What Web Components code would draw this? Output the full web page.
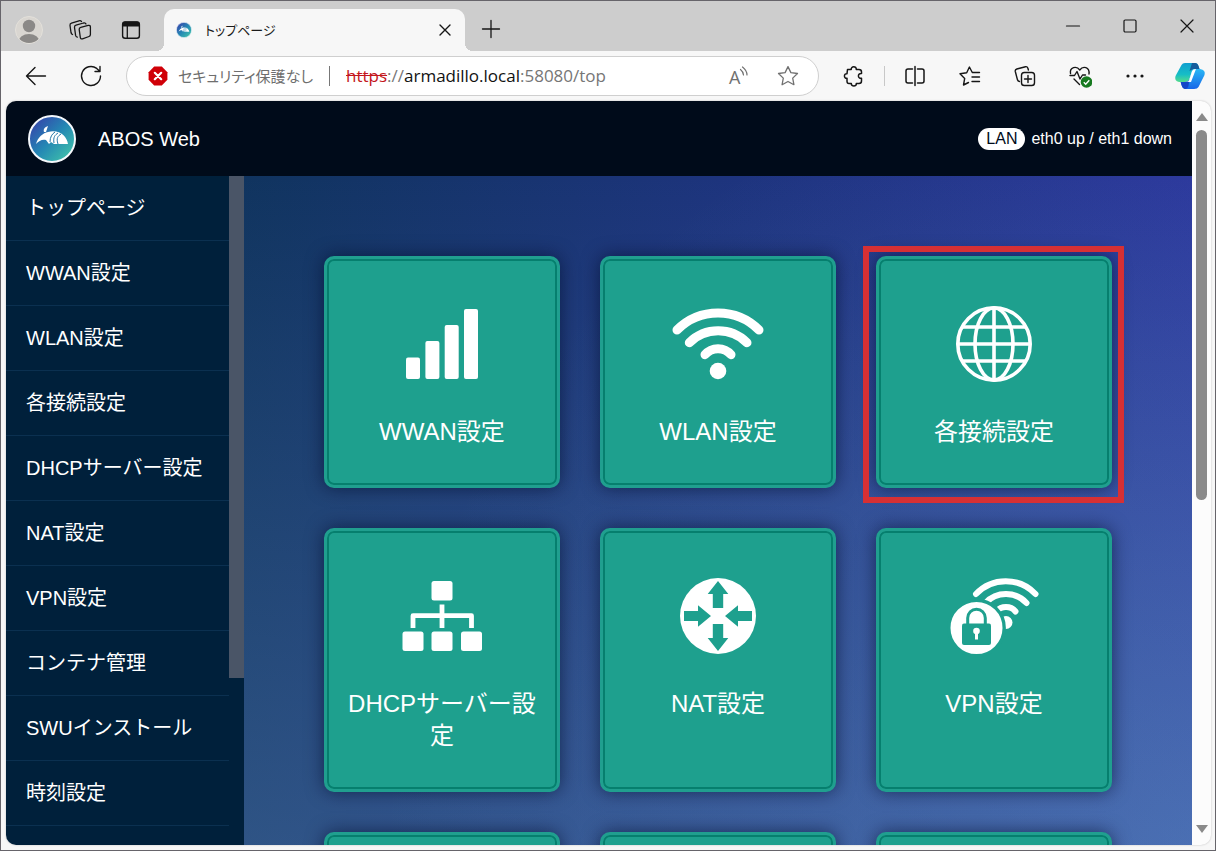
<!DOCTYPE html>
<html lang="ja">
<head>
<meta charset="utf-8">
<title>トップページ</title>
<style>
  html, body { margin: 0; height: 100%; }
  body { font-family: "Liberation Sans", "Noto Sans CJK JP", sans-serif; overflow: hidden; }
</style>
</head>
<body>
<browser-window>
  <tab-strip slot="tabs">トップページ</tab-strip>
  <tool-bar slot="toolbar"></tool-bar>
  <abos-page>
    <side-menu slot="menu">
      <menu-item>トップページ</menu-item>
      <menu-item>WWAN設定</menu-item>
      <menu-item>WLAN設定</menu-item>
      <menu-item>各接続設定</menu-item>
      <menu-item>DHCPサーバー設定</menu-item>
      <menu-item>NAT設定</menu-item>
      <menu-item>VPN設定</menu-item>
      <menu-item>コンテナ管理</menu-item>
      <menu-item>SWUインストール</menu-item>
      <menu-item>時刻設定</menu-item>
    </side-menu>
    <setting-card icon="bars">WWAN設定</setting-card>
    <setting-card icon="wifi">WLAN設定</setting-card>
    <setting-card icon="globe" marked>各接続設定</setting-card>
    <setting-card icon="tree">DHCPサーバー設定</setting-card>
    <setting-card icon="nat">NAT設定</setting-card>
    <setting-card icon="vpn">VPN設定</setting-card>
    <setting-card></setting-card>
    <setting-card></setting-card>
    <setting-card></setting-card>
  </abos-page>
</browser-window>

<script>
const S = 'fill="none" stroke="currentColor" stroke-linecap="round" stroke-linejoin="round"';
const LOGO = `<defs><linearGradient id="lg" x1="0" y1="0" x2="1" y2="1"><stop offset="0" stop-color="#3a35a8"/><stop offset=".5" stop-color="#2487b4"/><stop offset="1" stop-color="#45cfa8"/></linearGradient></defs>
  <circle cx="24" cy="24" r="23" fill="url(#lg)" stroke="#f4f8fc" stroke-width="2"/>
  <path fill="#fff" d="M8 29C10 22 15 18 20 17C31 14 39 21 40 29H26L23 27L21 29L18 25C14 24 11 26 8 29ZM16 17C15 14 17 12 20 11L18 17Z"/>
  <path d="M22 27C22 22 24 19 27 17M26 28C25 22 27 20 30 18M30 29C28 23 30 21 33 19" fill="none" stroke="#2477a8" stroke-width="1"/>`;
/* name -> [viewBox, markup] */
const ICONS = {
  logo: ['0 0 48 48', LOGO],
  profile: ['0 0 28 28', `<defs><clipPath id="pc"><circle cx="14" cy="14" r="13"/></clipPath></defs><circle cx="14" cy="14" r="13.5" fill="#d9d6d1" stroke="#e3e0da"/><g fill="#8b8987" clip-path="url(#pc)"><circle cx="14" cy="10" r="6.2"/><ellipse cx="14" cy="26" rx="10.5" ry="8"/></g>`],
  spaces: ['0 0 24 24', `<g ${S} stroke-width="1.3"><path d="M12.8 9.300L20.200 7.400Q22.400 7 22.400 9V16.500Q22.400 18 21 18.500L14.500 20.800Q12.500 21.400 12.300 19.400L11.200 11.500Q11 9.800 12.800 9.300Z"/><path d="M9.300 19.200Q8 19 7.600 17.400L6.500 9.500Q6.300 7.700 8 7.200L15.500 5Q17.500 4.600 18 6"/><path d="M4.500 16.500Q3.300 16 3 14.500L2 7.500Q1.800 5.600 3.500 5.100L11 2.800Q12.800 2.400 13.500 3.500"/></g>`],
  tabs: ['0 0 24 24', `<rect x="3.600" y="4" width="16.800" height="16.200" rx="2.500" ${S} stroke-width="1.400"/><path d="M3.500 8.500V6Q3.500 3.500 6 3.500H18Q20.500 3.500 20.500 6V8.500Z" fill="currentColor"/><path d="M8.300 8V20" ${S} stroke-width="1.300"/>`],
  cross: ['0 0 24 24', `<path d="M7 7L17 17M17 7L7 17" ${S} stroke-width="1.400"/>`],
  plus: ['0 0 24 24', `<path d="M12 3.500V20.500M3.500 12H20.500" ${S} stroke-width="1.300"/>`],
  minimize: ['0 0 24 24', `<path d="M5.500 12H18.500" ${S} stroke-width="1.200"/>`],
  maximize: ['0 0 24 24', `<rect x="6" y="6" width="12" height="12" rx="1.200" ${S} stroke-width="1.200"/>`],
  exit: ['0 0 24 24', `<path d="M6 6L18 18M18 6L6 18" ${S} stroke-width="1.200"/>`],
  back: ['0 0 24 24', `<path d="M21.500 12H2.500M11 3.500L2.500 12L11 20.500" ${S} stroke-width="1.400"/>`],
  reload: ['0 0 24 24', `<path d="M21.500 12A9.500 9.500 0 1 1 17.700 4.400L20.500 7M21 2.500V7.500H16" ${S} stroke-width="1.400"/>`],
  danger: ['0 0 20 20', `<path d="M6.200 .6H13.800L19.400 6.200V13.800L13.800 19.400H6.200L.6 13.800V6.200Z" fill="#d00008"/><path d="M6.800 6.800L13.200 13.200M13.200 6.800L6.800 13.200" stroke="#fff" stroke-width="2.200" stroke-linecap="round"/>`],
  read: ['0 0 24 24', `<text x="3" y="20" font-family="Open Sans, sans-serif" font-size="18" fill="currentColor">A</text><path d="M14.500 5.500Q17.500 8 17.500 11M16.500 3Q21 6.500 21 11" ${S} stroke-width="1.200"/>`],
  star: ['0 0 24 24', `<path d="M12 2.600L14.900 8.600L21.500 9.500L16.700 14.100L17.900 20.700L12 17.500L6.100 20.700L7.300 14.100L2.500 9.500L9.100 8.600Z" ${S} stroke-width="1.300"/>`],
  puzzle: ['0 0 24 24', `<path d="M5.500 5.500H9.200C8.800 1.800 14.600 1.800 14.300 5.500H17Q19.500 5.500 19.500 8V9.600C15.400 9 15.400 14.800 19.500 14.300V17Q19.500 19.500 17 19.500H14.300C14.800 22.800 9 22.800 9.300 19.500H7Q5 19.500 5 17.200V14.300C1.600 14.800 1.600 9.200 5 9.700Z" ${S} stroke-width="1.500"/>`],
  split: ['0 0 24 24', `<path d="M9.500 5H5Q3 5 3 7V17Q3 19 5 19H9.500M14.500 5H19Q21 5 21 7V17Q21 19 19 19H14.500M12 2.500V21.500" ${S} stroke-width="1.500"/>`],
  favorites: ['0 0 24 24', `<path d="M21.500 8.500H14.300L11.400 3L8.700 8.800L2 9.800L6.700 14.400L5.500 21L10.500 18.500M14 13H21.500M14 17.500H21.500" ${S} stroke-width="1.400"/>`],
  collections: ['0 0 24 24', `<path d="M6.500 17.500Q4.800 17.300 4.400 15.500L2.300 7.500Q1.900 5.600 3.800 5L12.500 2.700Q14.300 2.400 14.900 4.200L15.400 6" ${S} stroke-width="1.400"/><rect x="8.500" y="8.500" width="13" height="13" rx="2.800" ${S} stroke-width="1.400"/><path d="M15 11.500V18.500M11.500 15H18.500" ${S} stroke-width="1.400"/>`],
  health: ['0 0 24 24', `<path d="M2.500 9.500C1.500 3 8.500 1.500 11.800 6C15 1.500 21.800 3 21 10M6 15L11.500 20.500M2 11.500H6.500L9 7.500L12 15L14.500 11H17.500" ${S} stroke-width="1.400"/><circle cx="18.500" cy="18" r="5.800" fill="#177a20"/><path d="M15.800 18.300L17.700 20.200L21.300 16.200" fill="none" stroke="#fff" stroke-width="1.400"/>`],
  dots: ['0 0 24 24', `<g fill="currentColor"><circle cx="5" cy="12" r="1.600"/><circle cx="12" cy="12" r="1.600"/><circle cx="19" cy="12" r="1.600"/></g>`],
  copilot: ['0 0 32 32', `<defs><linearGradient id="c1" x1="0" y1="0" x2="0" y2="1"><stop offset="0" stop-color="#109fd0"/><stop offset=".6" stop-color="#16bdc6"/><stop offset="1" stop-color="#55dc8c"/></linearGradient><linearGradient id="c2" x1="0" y1="0" x2="0" y2="1"><stop offset="0" stop-color="#29b8f5"/><stop offset="1" stop-color="#1766e8"/></linearGradient></defs>
    <path d="M7.500 5Q8.500 3 11 3H21Q23.500 3 24.500 6L25.500 9Q19 8 17.500 13L15.500 19Q14.500 22 11 22H5Q0 21 1.500 16Z" fill="url(#c1)"/>
    <path d="M18 3H21Q23.500 3 24.500 6L25.500 9H19L15.500 11Z" fill="#155c9c"/>
    <path d="M24.500 27Q23.500 29 20 29H12Q8.500 29 7.500 25L6.700 22H11Q14.500 22 15.500 19L18 11Q18.800 9 22 9H26Q32 10 30.500 15Z" fill="url(#c2)"/>
    <path d="M6.700 22H11Q14.500 22 15.500 19L14.500 26Q13.500 29 11 29Q8 28 7.500 25Z" fill="#1546c8"/><path d="M18 11Q19 9 22 9L17 22H12Q15 22 15.500 19Z" fill="#fff"/>`],
  bars: ['0 0 96 96', `<g fill="#fff"><rect x="12" y="61.500" width="14" height="21.500" rx="2"/><rect x="31.400" y="45" width="14" height="38" rx="2"/><rect x="50.700" y="29" width="14" height="54" rx="2"/><rect x="70" y="13" width="14" height="70" rx="2"/></g>`],
  wifi: ['0 0 96 96', `<path d="M7 34A58 58 0 0 1 89 34M19.300 46.700A41 41 0 0 1 77 46.700M35 58.700A17 17 0 0 1 61 58.700" fill="none" stroke="#fff" stroke-width="9" stroke-linecap="round"/><circle cx="48" cy="75" r="8.300" fill="#fff"/>`],
  globe: ['0 0 96 96', `<g fill="none" stroke="#fff" stroke-width="3.600"><circle cx="48" cy="48" r="36.200"/><ellipse cx="48" cy="48" rx="19" ry="36"/><path d="M48 12V84M12 48H84M17 31H79M17 65H79"/></g>`],
  tree: ['0 0 96 96', `<g fill="#fff"><rect x="37.500" y="13" width="21" height="19.500" rx="2.500"/><rect x="8.500" y="63.500" width="21" height="19.500" rx="2.500"/><rect x="37.500" y="63.500" width="21" height="19.500" rx="2.500"/><rect x="67" y="63.500" width="21" height="19.500" rx="2.500"/></g><path d="M19 60V47.700H77.500V60M48 36.500V60" fill="none" stroke="#fff" stroke-width="4.800" stroke-linejoin="round"/>`],
  nat: ['0 0 96 96', `<circle cx="48" cy="48" r="38" fill="#fff"/><g fill="#1ea08e"><path d="M48 13L58.300 26H53.200V40H42.800V26H37.700Z"/><path d="M48 83L58.300 70H53.200V56H42.800V70H37.700Z"/><path d="M41 48L28 37.300V43H14V53H28V58.700Z"/><path d="M55 48L68 37.300V43H82V53H68V58.700Z"/></g>`],
  vpn: ['0 0 96 96', `<path d="M30 26A41 41 0 0 1 89.500 26M39.500 35A28 28 0 0 1 80.500 35M50.500 43.500A12.500 12.500 0 0 1 69.500 43.500" fill="none" stroke="#fff" stroke-width="6" stroke-linecap="round"/><circle cx="60" cy="54.500" r="6.500" fill="#fff"/>
    <circle cx="30.500" cy="60" r="27.700" fill="#fff" stroke="#1ea08e" stroke-width="3.400"/><rect x="16" y="55.500" width="29" height="21.500" rx="2" fill="#1ea08e"/><path d="M21.700 57V50A8.800 8.800 0 0 1 39.300 50V57" fill="none" stroke="#1ea08e" stroke-width="3"/><circle cx="30.500" cy="63" r="3.300" fill="#fff"/><path d="M29 64H32V71.500H29Z" fill="#fff"/>`]
};

const define = (name, html, setup) => {
  const template = document.createElement('template');
  template.innerHTML = html;
  customElements.define(name, class extends HTMLElement {
    constructor() {
      super();
      this.attachShadow({ mode: 'open' }).append(template.content.cloneNode(true));
    }
    connectedCallback() { if (setup) setup(this, this.shadowRoot); }
  });
};

define('ui-icon', `<style>
  :host { display: block; flex: none; width: 24px; height: 24px; }
  div, svg { display: block; width: 100%; height: 100%; }
</style><div></div>`, (el, root) => {
  const icon = ICONS[el.getAttribute('name')];
  root.querySelector('div').innerHTML = icon ? `<svg viewBox="${icon[0]}" aria-hidden="true">${icon[1]}</svg>` : '';
});

define('icon-button', `<style>
  :host { display: block; flex: none; width: 40px; color: #161616; }
  button { all: unset; display: flex; align-items: center; justify-content: center; width: 100%; height: 40px; }
</style><button type="button"></button>`, (el, root) => {
  const button = root.querySelector('button');
  button.setAttribute('aria-label', el.getAttribute('label'));
  const icon = document.createElement('ui-icon');
  icon.setAttribute('name', el.getAttribute('icon'));
  const size = el.getAttribute('size');
  if (size) icon.style.width = icon.style.height = size + 'px';
  button.replaceChildren(icon);
});

define('browser-window', `<style>
  :host { display: flex; flex-direction: column; box-sizing: border-box; height: 100vh; border: 1px solid #66646a; background: #f7f7f7; }
  .view { display: flex; flex: 1; min-height: 0; margin: 0 4px 5px 5px; border-radius: 10px; overflow: hidden; background: #fcfcfc; box-shadow: 0 0 2px #bbb; }
  ::slotted(abos-page) { flex: 1; }
</style>
<slot name="tabs"></slot><slot name="toolbar"></slot>
<div class="view"><slot></slot><page-scrollbar></page-scrollbar></div>`);

define('page-scrollbar', `<style>
  :host { display: flex; flex-direction: column; align-items: center; gap: 9px; box-sizing: border-box; width: 19px; padding: 12px 0; }
  i { width: 0; height: 0; border: 6px solid transparent; }
  .up { border-top: 0; border-bottom: 8px solid #8a8a8a; }
  .down { border-bottom: 0; border-top: 8px solid #8a8a8a; }
  .track { flex: 1; width: 11px; }
  .thumb { height: 54%; border-radius: 6px; background: #8a8a8a; }
</style><i class="up"></i><div class="track"><div class="thumb"></div></div><i class="down"></i>`);

define('tab-strip', `<style>
  :host { display: flex; flex: none; height: 50px; background: #cdcdcd; }
  .left { display: flex; align-items: center; gap: 11px; padding: 8px 13px 0 8px; }
  .tab { position: relative; display: flex; align-items: center; flex: 0 1 301px; gap: 13px; box-sizing: border-box; margin-top: 8px; padding-left: 12px; border-radius: 10px 10px 0 0; background: #f7f7f7; }
  .tab::before, .tab::after { content: ""; position: absolute; bottom: 0; width: 8px; height: 8px; }
  .tab::before { right: 100%; background: radial-gradient(circle at 0 0, #cdcdcd 8px, #f7f7f7 8px); }
  .tab::after { left: 100%; background: radial-gradient(circle at 100% 0, #cdcdcd 8px, #f7f7f7 8px); }
  .title { flex: 1; font-size: 13px; line-height: 20px; color: #1b1b1b; font-family: "Noto Sans CJK JP", sans-serif; font-feature-settings: "palt"; }
  .add { margin: 8px 0 0 6px; }
  .controls { display: flex; margin-left: auto; padding-top: 5px; }
  .controls icon-button { width: 57px; }
  .favicon { width: 16px; height: 16px; }
</style>
<div class="left"><icon-button icon="profile" size="28" label="プロファイル"></icon-button><icon-button icon="spaces" label="ワークスペース"></icon-button><icon-button icon="tabs" label="タブ操作"></icon-button></div>
<div class="tab"><ui-icon class="favicon" name="logo"></ui-icon><span class="title"><slot></slot></span><icon-button icon="cross" label="タブを閉じる"></icon-button></div>
<icon-button class="add" icon="plus" label="新しいタブ"></icon-button>
<div class="controls"><icon-button icon="minimize" label="最小化"></icon-button><icon-button icon="maximize" label="最大化"></icon-button><icon-button icon="exit" label="閉じる"></icon-button></div>`);

define('tool-bar', `<style>
  :host { display: flex; flex: none; align-items: center; gap: 15px; height: 50px; padding: 0 5px 0 15px; }
  .address { display: flex; flex: 1; align-items: center; box-sizing: border-box; height: 40px; padding: 0 5px 0 21px; border: 1px solid #cfcfcf; border-radius: 20px; background: #fff; color: #6e6e6e; min-width: 0; white-space: nowrap; }
  .danger { width: 20px; height: 20px; }
  .state { margin-left: 10px; font: 15px/24px "Noto Sans CJK JP", sans-serif; font-feature-settings: "palt"; }
  .bar { width: 1px; height: 20px; margin: 0 16px; background: #777; }
  .url { flex: 1; outline: 0; font: 17px/24px "Open Sans", sans-serif; color: #767676; }
  .url s { color: #c4161c; }
  .url b { font-weight: 400; color: #111; }
  .address icon-button { color: #707070; width: 50px; }
  .sep { width: 1px; height: 20px; margin: 0 -5px; background: #c8c8c8; }
</style>
<icon-button icon="back" label="戻る"></icon-button><icon-button icon="reload" label="更新"></icon-button>
<div class="address"><ui-icon class="danger" name="danger"></ui-icon><span class="state">セキュリティ保護なし</span><span class="bar"></span>
<div class="url" role="textbox" contenteditable="true" spellcheck="false" aria-label="アドレス"><s>https</s>://<b>armadillo.local</b>:58080/top</div>
<icon-button icon="read" label="音声で読み上げる"></icon-button><icon-button icon="star" label="お気に入りに追加"></icon-button></div>
<icon-button icon="puzzle" label="拡張機能"></icon-button><span class="sep"></span><icon-button icon="split" label="画面を分割する"></icon-button><icon-button icon="favorites" label="お気に入り"></icon-button><icon-button icon="collections" label="コレクション"></icon-button><icon-button icon="health" label="ブラウザーのエッセンシャル"></icon-button><icon-button icon="dots" label="設定など"></icon-button><icon-button icon="copilot" size="32" label="Copilot"></icon-button>`);

define('abos-page', `<style>
  :host { display: flex; flex-direction: column; min-width: 0; }
  header { display: flex; flex: none; align-items: center; height: 75px; padding: 0 20px 0 22px; background: #000b1a; color: #fff; }
  header ui-icon { width: 48px; height: 48px; }
  h1 { margin: 0 auto 0 22px; font-size: 20px; line-height: 24px; font-weight: 400; }
  .lan { margin-right: 6px; padding: 0 8px; border-radius: 11px; background: #fff; color: #000b1a; }
  .lan, .state { font-size: 16px; line-height: 22px; }
  .body { display: flex; flex: 1; min-height: 0; }
  main { display: grid; flex: 1; grid-template-columns: repeat(3, 1fr); grid-auto-rows: max-content; gap: 40px; min-width: 0; padding: 80px; overflow: hidden;
    background: radial-gradient(circle at 100% 100%, rgba(120,220,210,.2), rgba(120,220,210,0) 70%), linear-gradient(rgba(100,140,200,0), rgba(100,140,200,.36)), linear-gradient(to right, #10345f, #2a349b); }
</style>
<header><ui-icon name="logo"></ui-icon><h1>ABOS Web</h1><span class="lan">LAN</span><span class="state">eth0 up / eth1 down</span></header>
<div class="body"><slot name="menu"></slot><main><slot></slot></main></div>`);

define('side-menu', `<style>
  :host { display: flex; flex: none; width: 238px; background: #00203b; overflow: hidden; }
  nav { flex: 1; }
  .track { width: 15px; }
  .thumb { height: 75%; background: #4a5567; }
</style><nav><slot></slot></nav><div class="track"><div class="thumb"></div></div>`);

define('menu-item', `<style>
  :host { display: block; }
  a { display: block; padding: 16px 20px; border-bottom: 1px solid #0b3050; color: #fff; font-size: 20px; line-height: 32px; text-decoration: none; white-space: nowrap; }
</style><a href="#"><slot></slot></a>`);

define('setting-card', `<style>
  :host { display: grid; position: relative; min-height: 232px; }
  a { display: flex; flex-direction: column; align-items: center; gap: 24px; box-sizing: border-box; padding: 37px 17px; border: 3px solid #209f8f; border-radius: 10px; background: #1ea08e; box-shadow: inset 0 0 0 2px #067f6e, 0 0 18px rgba(0,10,40,.6); color: #fff; font-size: 24px; line-height: 32px; text-align: center; text-decoration: none; word-break: break-all; }
  ui-icon { width: 96px; height: 96px; }
  :host([marked])::after { content: ""; position: absolute; inset: -10px -12px -15px -13px; border: 6px solid #d63034; pointer-events: none; }
</style><a href="#"><ui-icon></ui-icon><span><slot></slot></span></a>`, (el, root) => {
  const icon = document.createElement('ui-icon');
  icon.setAttribute('name', el.getAttribute('icon') || '');
  root.querySelector('ui-icon').replaceWith(icon);
});
</script>
</body>
</html>
